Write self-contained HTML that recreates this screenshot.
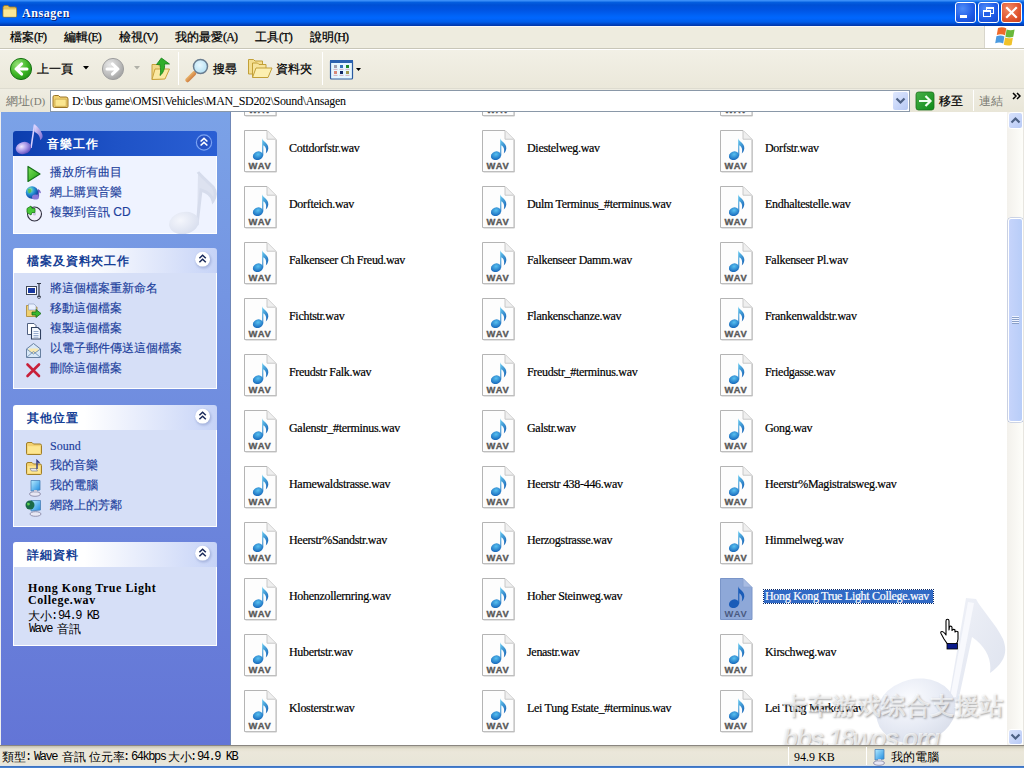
<!DOCTYPE html>
<html><head><meta charset="utf-8">
<style>
*{margin:0;padding:0;box-sizing:border-box}
html,body{width:1024px;height:768px;overflow:hidden;background:#fff;font-family:"Liberation Sans",sans-serif;font-size:12px;color:#000}
.a,.fn,.wi,.mi,.panel,.it,svg.ic{position:absolute;white-space:nowrap}
#title{left:0;top:0;width:1024px;height:26px;background:linear-gradient(#3a8ef8 0,#3a8ef8 1px,#0560e0 2px,#0050d5 5px,#0054e3 10px,#0064f8 16px,#0066fe 18px,#005de9 22px,#0047c8 24px,#0035a5 26px)}
#ttext{left:22px;top:6px;font-family:"Liberation Serif",serif;font-weight:bold;font-size:12px;line-height:14px;color:#fff;letter-spacing:0.55px;text-shadow:1px 1px 0 #0a1e70}
.tbtn{position:absolute;top:2px;width:21px;height:21px;border:1px solid #fff;border-radius:3px;background:radial-gradient(circle at 35% 30%,#4f8cf8,#1e5ae6 60%,#1848c8)}
.tbtn.x{background:radial-gradient(circle at 35% 30%,#f08a68,#e0542e 60%,#c8401e)}
#menu{left:0;top:26px;width:1024px;height:23px;background:#eeecdf;border-top:1px solid #f8f8f8;border-bottom:1px solid #c8c6b8}
#logo{left:984px;top:26px;width:40px;height:22px;background:#fff;border-left:1px solid #d8d6cc}
.mi{top:31px;font-size:12px;line-height:13px;-webkit-text-stroke:0.25px #000}
.mi i{font-style:normal;font-family:"Liberation Serif",serif;font-size:12px;letter-spacing:-0.8px}
#tb{left:0;top:49px;width:1024px;height:39px;background:linear-gradient(#f2f0e6,#ebe8da);border-top:1px solid #fff}
.sep{position:absolute;width:1px;background:#c8c6b8;border-right:1px solid #fff}
#addr{left:0;top:88px;width:1024px;height:24px;background:linear-gradient(#efede2,#e9e6d8);border-top:1px solid #dedcd0}
#abox{left:50px;top:90px;width:860px;height:22px;background:#fff;border:1px solid #8a98a8}
#pane{left:0;top:112px;width:231px;height:633px;background:linear-gradient(#7ba2e7,#6375d6);border-left:1px solid #eeeeee}
#list{left:231px;top:112px;width:777px;height:633px;background:#fff}
#sb{left:1007px;top:112px;width:17px;height:633px;background:linear-gradient(90deg,#f3f1ec,#fefefa)}
#status{left:0;top:745px;width:1024px;height:23px;background:linear-gradient(#c4c0b0 0,#e6e2d2 3px,#ebe7da 6px,#e8e6d8 18px,#dde3ea 20px);border-top:1px solid #8a8680}
#sbot{left:0;top:766px;width:1024px;height:2px;background:linear-gradient(#3a6cb8,#4a88d8)}
.panel{left:13px;width:204px}
.ph{position:relative;height:25px;border-radius:3px 3px 0 0;background:linear-gradient(90deg,#fff 0,#fff 35%,#c6d3f7 100%);color:#163f96;font-weight:bold;font-size:12px;line-height:26px;padding-left:14px;letter-spacing:0.9px}
.ph.sp{background:linear-gradient(90deg,#0c3dae 0,#1e52c6 50%,#2a5fd4 100%);color:#fff;padding-left:34px;font-size:12px;line-height:26px;letter-spacing:0.9px}
.pb{position:relative;background:#d6dff7;border:1px solid #fff;border-top:0}
.pb.sp{background:#eff3ff}
.cbtn{position:absolute;right:5px;top:4px;width:18px;height:18px;border-radius:50%;background:#fff;box-shadow:1px 1px 2px rgba(60,80,140,.45);border:1px solid #d8dde8}
.ph.sp .cbtn{background:transparent;border:1px solid #7ea0e8;box-shadow:none}
.it{left:37px;color:#1c409c;font-size:12px;line-height:14px;-webkit-text-stroke:0.15px #1c409c}
.fn{font-family:"Liberation Serif",serif;font-size:12px;line-height:14px;color:#000;padding:0 1px;letter-spacing:-0.3px;-webkit-text-stroke:0.2px #000}
.fn.sel{padding:0 4px 0 1px;background:#316ac5;color:#fff;outline:1px dotted #0a2a6a;-webkit-text-stroke:0.2px #fff;line-height:13px;margin-top:1px}
.wi{width:33px;height:43px}
.lm{font-family:"Liberation Mono",monospace;font-size:12px;line-height:13px;letter-spacing:-1.45px}
.st{top:751px;font-size:12px;line-height:13px}
.mono{font-family:"Liberation Mono",monospace;font-size:10px}
</style></head><body>
<svg width="0" height="0" style="position:absolute">
<defs>
<linearGradient id="noteg" x1="0" y1="0" x2="1" y2="1"><stop offset="0" stop-color="#5fc6f2"/><stop offset="1" stop-color="#0f68c0"/></linearGradient>
<linearGradient id="notes" x1="0" y1="0" x2="0.6" y2="1"><stop offset="0" stop-color="#6cd0f4"/><stop offset="1" stop-color="#1a66b8"/></linearGradient>
<radialGradient id="noteh" cx="0.55" cy="0.35" r="0.7"><stop offset="0" stop-color="#58c0f0"/><stop offset="1" stop-color="#1262b8"/></radialGradient>
<symbol id="wav" viewBox="0 0 33 43">
<path d="M0.5 0.5H23L32 9.5V41.5H0.5Z" fill="#fdfdfd" stroke="#b4b4b4"/>
<path d="M1.5 42H32.5V10" fill="none" stroke="#c8c8c8"/>
<path d="M23 0.8V9.2H31.5" fill="#efefef" stroke="#c8c8c8"/>
<path d="M18.2 8.2C18.6 11.5 24.8 12.8 24.3 18.5C24.1 20.8 23 22.4 21.8 23.6C22.4 20.5 22.6 17 19.3 15.2V25.5H18.2Z" fill="url(#notes)"/>
<ellipse cx="14" cy="25.7" rx="5.2" ry="4.2" transform="rotate(-20 14 25.7)" fill="url(#noteh)"/>
<text x="16.1" y="38.6" text-anchor="middle" font-family="Liberation Sans" font-weight="bold" font-size="9.4" fill="#585858" stroke="#585858" stroke-width="0.35" letter-spacing="0.9">WAV</text>
</symbol>
<symbol id="wavsel" viewBox="0 0 33 43">
<path d="M0.5 0.5H23L32 9.5V41.5H0.5Z" fill="#8ea8d8" stroke="#7a95c8"/>
<path d="M23 0.8V9.2H31.5" fill="#a8bce2" stroke="#8aa2d0"/>
<path d="M18.2 8.2C18.6 11.5 24.8 12.8 24.3 18.5C24.1 20.8 23 22.4 21.8 23.6C22.4 20.5 22.6 17 19.3 15.2V25.5H18.2Z" fill="#1a5cb8"/>
<ellipse cx="14" cy="25.7" rx="5.2" ry="4.2" transform="rotate(-20 14 25.7)" fill="#1a5cb8"/>
<text x="16.1" y="38.6" text-anchor="middle" font-family="Liberation Sans" font-weight="bold" font-size="9.4" fill="#4a5a80" letter-spacing="0.9">WAV</text>
</symbol>
</defs>
</svg>
<div id="title" class="a"></div>
<div id="ttext" class="a">Ansagen</div>
<div class="tbtn" style="left:955px"></div>
<div class="tbtn" style="left:978px"></div>
<div class="tbtn x" style="left:1001px"></div>

<svg class="ic" style="left:2px;top:4px" width="16" height="14" viewBox="0 0 16 14">
<path d="M1 3.5Q1 1.5 3 1.5H6L7.5 3H13Q14.5 3 14.5 4.5V12Q14.5 13 13.5 13H2Q1 13 1 12Z" fill="#e6c25a" stroke="#a07820" stroke-width="0.8"/>
<path d="M1.5 5.5H14.2V12.2Q14.2 12.8 13.5 12.8H2Q1.5 12.8 1.5 12.2Z" fill="#fde898"/>
</svg>
<div class="a" style="left:960px;top:15px;width:7px;height:3px;background:#fff"></div>
<div class="a" style="left:986px;top:7px;width:8px;height:7px;border:1px solid #fff;border-top-width:2px"></div>
<div class="a" style="left:983px;top:10px;width:8px;height:7px;border:1px solid #fff;border-top-width:2px;background:#2560e8"></div>
<svg class="ic" style="left:1001px;top:2px" width="21" height="21" viewBox="0 0 21 21"><path d="M6 6L15 15M15 6L6 15" stroke="#fff" stroke-width="2.2" stroke-linecap="square"/></svg>
<div id="menu" class="a"></div>
<div id="logo" class="a"></div>
<svg class="ic" style="left:994px;top:26px" width="22" height="21" viewBox="0 0 22 21">
<path d="M4 2Q8 0.5 12.3 2.2L11 9.2Q7 7.6 2.8 9Z" fill="#ef6a2a"/>
<path d="M12.6 3.6Q16.5 5 20.6 3.6L19.3 10.8Q15.4 12.2 11.4 10.8Z" fill="#6ab83a"/>
<path d="M2.4 10.2Q6.5 8.8 10.4 10.4L9.2 17.4Q5.4 15.8 1.2 17.2Z" fill="#4a9ae0"/>
<path d="M11 11.6Q14.8 13 18.9 11.8L17.6 19Q13.8 20.3 9.8 18.8Z" fill="#f0c22a"/>
</svg>

<div class="mi" style="left:10px">檔案<i>(F)</i></div>
<div class="mi" style="left:64px">編輯<i>(E)</i></div>
<div class="mi" style="left:119px">檢視<i>(V)</i></div>
<div class="mi" style="left:175px">我的最愛<i>(A)</i></div>
<div class="mi" style="left:255px">工具<i>(T)</i></div>
<div class="mi" style="left:310px">說明<i>(H)</i></div>
<div id="tb" class="a"></div>
<div class="sep" style="left:178px;top:52px;height:33px"></div>
<div class="sep" style="left:322px;top:52px;height:33px"></div>
<div class="a" style="left:37px;top:62px;font-size:12px;line-height:14px;-webkit-text-stroke:0.25px #000">上一頁</div>
<div class="a" style="left:213px;top:62px;font-size:12px;line-height:14px;-webkit-text-stroke:0.25px #000">搜尋</div>
<div class="a" style="left:276px;top:62px;font-size:12px;line-height:14px;-webkit-text-stroke:0.25px #000">資料夾</div>

<svg class="ic" style="left:9px;top:57px" width="24" height="24" viewBox="0 0 24 24">
<defs><radialGradient id="gbk" cx="0.35" cy="0.3" r="0.8"><stop offset="0" stop-color="#9ae27a"/><stop offset="0.6" stop-color="#3cb524"/><stop offset="1" stop-color="#1d8a14"/></radialGradient></defs>
<circle cx="12" cy="12" r="10.6" fill="url(#gbk)" stroke="#1b7318" stroke-width="1"/>
<path d="M12.6 6.8L7 12L12.6 17.2M7.2 12H18" fill="none" stroke="#fff" stroke-width="3" stroke-linecap="round" stroke-linejoin="round"/>
</svg>
<svg class="ic" style="left:83px;top:66px" width="6" height="4"><path d="M0 0H6L3 3.5Z" fill="#000"/></svg>
<svg class="ic" style="left:101px;top:57px" width="24" height="24" viewBox="0 0 24 24">
<defs><radialGradient id="ggr" cx="0.35" cy="0.3" r="0.8"><stop offset="0" stop-color="#e8e8e8"/><stop offset="0.6" stop-color="#bdbdbd"/><stop offset="1" stop-color="#9a9a9a"/></radialGradient></defs>
<circle cx="12" cy="12" r="10.6" fill="url(#ggr)" stroke="#a0a0a0" stroke-width="1"/>
<path d="M11.4 6.8L17 12L11.4 17.2M16.8 12H6" fill="none" stroke="#fff" stroke-width="3" stroke-linecap="round" stroke-linejoin="round"/>
</svg>
<svg class="ic" style="left:134px;top:66px" width="6" height="4"><path d="M0 0H6L3 3.5Z" fill="#b0b0a8"/></svg>
<svg class="ic" style="left:150px;top:56px" width="22" height="26" viewBox="0 0 22 26">
<path d="M2 8.5H8L9.5 10H14V22.5L2 23.5Z" fill="#f2d98a" stroke="#c9a23c" stroke-width="1"/>
<path d="M2 23.5L5 13H19.5L15 23Z" fill="#fbe9a4" stroke="#c9a23c" stroke-width="1"/>
<path d="M11.4 2L6.5 8.5H10C10.5 12 11 16 10 19.5C13.5 17 15 12 14.5 8H19.5Z" fill="#2fae2a" stroke="#15821a" stroke-width="0.8"/>
</svg>
<svg class="ic" style="left:183px;top:56px" width="28" height="28" viewBox="0 0 28 28">
<defs><radialGradient id="gls" cx="0.45" cy="0.4" r="0.6"><stop offset="0" stop-color="#e8f8ff"/><stop offset="1" stop-color="#b4e0f4"/></radialGradient>
<linearGradient id="ghd" x1="0" y1="0" x2="1" y2="1"><stop offset="0" stop-color="#f8d080"/><stop offset="1" stop-color="#c0602a"/></linearGradient></defs>
<path d="M4.5 24L11 17.5" stroke="url(#ghd)" stroke-width="4.5" stroke-linecap="round"/>
<circle cx="17.5" cy="10.5" r="7" fill="url(#gls)" stroke="#6a7d90" stroke-width="1.5"/>
</svg>
<svg class="ic" style="left:247px;top:58px" width="26" height="22" viewBox="0 0 26 22">
<path d="M1.5 1.5H6.5L8 3H15.5V16H1.5Z" fill="#f4de90" stroke="#c2a038" stroke-width="1"/>
<path d="M5.5 5H10.5L12 6.5H19V19H5.5Z" fill="#f7e49c" stroke="#c2a038" stroke-width="1"/>
<path d="M5.5 19.5L9 10H25L21 19.5Z" fill="#fcefb0" stroke="#c2a038" stroke-width="1"/>
</svg>
<svg class="ic" style="left:329px;top:59px" width="36" height="22" viewBox="0 0 36 22">
<rect x="1.5" y="1.5" width="22" height="18.5" rx="1" fill="#e6f6ff" stroke="#2a5aa0" stroke-width="1.2"/>
<rect x="1" y="1" width="23" height="3" fill="#2a62b0"/>
<rect x="5" y="6" width="3" height="3" fill="#a0a0b0"/><rect x="11" y="6" width="3" height="3" fill="#3070b8"/><rect x="17" y="6" width="3" height="3" fill="#208828"/>
<rect x="5" y="12" width="3" height="3" fill="#d88878"/><rect x="11" y="12" width="3" height="3" fill="#102868"/><rect x="17" y="12" width="3" height="3" fill="#a09850"/>
<path d="M4.5 10.4H8.5M10.5 10.4H14.5M16.5 10.4H20.5M4.5 16.4H8.5M10.5 16.4H14.5M16.5 16.4H20.5" stroke="#c8a0b0" stroke-width="0.8"/>
<path d="M27 9H32L29.5 12Z" fill="#000"/>
</svg>
<div id="addr" class="a"></div>
<div class="a" style="left:6px;top:95px;color:#7a7a72;font-size:12px;line-height:13px">網址<i style="font-style:normal;font-family:'Liberation Serif';font-size:11px">(D)</i></div>
<div id="abox" class="a"></div>
<svg class="ic" style="left:52px;top:94px" width="18" height="15" viewBox="0 0 18 15">
<path d="M1 3Q1 1.5 2.5 1.5H6.5L8 3H14Q16 3 16 5V12.5Q16 13.5 15 13.5H2.5Q1 13.5 1 12Z" fill="#f0d070" stroke="#9a7428" stroke-width="1"/>
<path d="M3 5.2H14.2V12.3H3Z" fill="#fbe690" stroke="#c09a40" stroke-width="0.6"/>
</svg>
<div class="a" style="left:893px;top:92px;width:15px;height:18px;border-radius:2px;background:linear-gradient(135deg,#dfe8fe,#b6c8f4)"></div>
<svg class="ic" style="left:895px;top:97px" width="11" height="8" viewBox="0 0 11 8"><path d="M1.5 1.5L5.5 5.5L9.5 1.5" fill="none" stroke="#4d6185" stroke-width="2.2"/></svg>
<svg class="ic" style="left:915px;top:91px" width="20" height="20" viewBox="0 0 20 20">
<defs><linearGradient id="ggo" x1="0" y1="0" x2="1" y2="1"><stop offset="0" stop-color="#48b048"/><stop offset="1" stop-color="#0c8a18"/></linearGradient></defs>
<rect x="1" y="1" width="18" height="18" rx="2.5" fill="url(#ggo)" stroke="#1c6e1c" stroke-width="0.8"/>
<path d="M4 10H15M10.5 5L15.5 10L10.5 15" fill="none" stroke="#f0fff0" stroke-width="2.2"/>
</svg>
<svg class="ic" style="left:1012px;top:92px" width="9" height="8" viewBox="0 0 9 8"><path d="M1 1L4 4L1 7M5 1L8 4L5 7" fill="none" stroke="#000" stroke-width="1.5"/></svg>

<div class="a" style="left:72px;top:95px;font-family:'Liberation Serif',serif;font-size:12px;line-height:13px;letter-spacing:-0.3px">D:\bus game\OMSI\Vehicles\MAN_SD202\Sound\Ansagen</div>
<div class="a" style="left:939px;top:95px;font-size:12px;line-height:13px;-webkit-text-stroke:0.25px #000">移至</div>
<div class="sep" style="left:973px;top:90px;height:21px"></div>
<div class="a" style="left:979px;top:95px;font-size:12px;line-height:13px;color:#7a7a72">連結</div>
<div id="pane" class="a"></div>
<div id="list" class="a"></div><div class="a" style="left:230px;top:112px;width:1px;height:633px;background:#7088b8"></div>
<div id="sb" class="a"></div>
<div class="a" style="left:1008px;top:112px;width:15px;height:17px;border:1px solid #fff;border-radius:3px;background:linear-gradient(135deg,#d8e2fc,#b8caf6)"></div>
<svg class="ic" style="left:1010px;top:116px" width="11" height="8" viewBox="0 0 11 8"><path d="M1.5 6.5L5.5 2.5L9.5 6.5" fill="none" stroke="#4d6185" stroke-width="2.2"/></svg>
<div class="a" style="left:1008px;top:218px;width:15px;height:204px;border:1px solid #fff;border-radius:3px;background:linear-gradient(90deg,#c6d4fb,#b8cdf8);box-shadow:0 0 0 0.5px #9fb0d8"></div>
<div class="a" style="left:1012px;top:316px;width:7px;height:8px;background:repeating-linear-gradient(#eef3ff 0,#eef3ff 1px,#8aa0c8 1px,#8aa0c8 2px)"></div>
<div class="a" style="left:1008px;top:729px;width:15px;height:16px;border:1px solid #fff;border-radius:3px;background:linear-gradient(135deg,#d8e2fc,#b8caf6)"></div>
<svg class="ic" style="left:1010px;top:733px" width="11" height="8" viewBox="0 0 11 8"><path d="M1.5 1.5L5.5 5.5L9.5 1.5" fill="none" stroke="#4d6185" stroke-width="2.2"/></svg>
<div class="a" style="left:1023px;top:112px;width:1px;height:633px;background:#e8e6e0"></div>

<div class="a" style="left:231px;top:112px;width:777px;height:633px;overflow:hidden"><svg class="wi" style="left:13px;top:-38px" width="33" height="43"><use href="#wav"/></svg>
<svg class="wi" style="left:251px;top:-38px" width="33" height="43"><use href="#wav"/></svg>
<svg class="wi" style="left:489px;top:-38px" width="33" height="43"><use href="#wav"/></svg>
<svg class="wi" style="left:13px;top:18px" width="33" height="43"><use href="#wav"/></svg>
<div class="fn" style="left:57px;top:29px">Cottdorfstr.wav</div>
<svg class="wi" style="left:251px;top:18px" width="33" height="43"><use href="#wav"/></svg>
<div class="fn" style="left:295px;top:29px">Diestelweg.wav</div>
<svg class="wi" style="left:489px;top:18px" width="33" height="43"><use href="#wav"/></svg>
<div class="fn" style="left:533px;top:29px">Dorfstr.wav</div>
<svg class="wi" style="left:13px;top:74px" width="33" height="43"><use href="#wav"/></svg>
<div class="fn" style="left:57px;top:85px">Dorfteich.wav</div>
<svg class="wi" style="left:251px;top:74px" width="33" height="43"><use href="#wav"/></svg>
<div class="fn" style="left:295px;top:85px">Dulm Terminus_#terminus.wav</div>
<svg class="wi" style="left:489px;top:74px" width="33" height="43"><use href="#wav"/></svg>
<div class="fn" style="left:533px;top:85px">Endhaltestelle.wav</div>
<svg class="wi" style="left:13px;top:130px" width="33" height="43"><use href="#wav"/></svg>
<div class="fn" style="left:57px;top:141px">Falkenseer Ch Freud.wav</div>
<svg class="wi" style="left:251px;top:130px" width="33" height="43"><use href="#wav"/></svg>
<div class="fn" style="left:295px;top:141px">Falkenseer Damm.wav</div>
<svg class="wi" style="left:489px;top:130px" width="33" height="43"><use href="#wav"/></svg>
<div class="fn" style="left:533px;top:141px">Falkenseer Pl.wav</div>
<svg class="wi" style="left:13px;top:186px" width="33" height="43"><use href="#wav"/></svg>
<div class="fn" style="left:57px;top:197px">Fichtstr.wav</div>
<svg class="wi" style="left:251px;top:186px" width="33" height="43"><use href="#wav"/></svg>
<div class="fn" style="left:295px;top:197px">Flankenschanze.wav</div>
<svg class="wi" style="left:489px;top:186px" width="33" height="43"><use href="#wav"/></svg>
<div class="fn" style="left:533px;top:197px">Frankenwaldstr.wav</div>
<svg class="wi" style="left:13px;top:242px" width="33" height="43"><use href="#wav"/></svg>
<div class="fn" style="left:57px;top:253px">Freudstr Falk.wav</div>
<svg class="wi" style="left:251px;top:242px" width="33" height="43"><use href="#wav"/></svg>
<div class="fn" style="left:295px;top:253px">Freudstr_#terminus.wav</div>
<svg class="wi" style="left:489px;top:242px" width="33" height="43"><use href="#wav"/></svg>
<div class="fn" style="left:533px;top:253px">Friedgasse.wav</div>
<svg class="wi" style="left:13px;top:298px" width="33" height="43"><use href="#wav"/></svg>
<div class="fn" style="left:57px;top:309px">Galenstr_#terminus.wav</div>
<svg class="wi" style="left:251px;top:298px" width="33" height="43"><use href="#wav"/></svg>
<div class="fn" style="left:295px;top:309px">Galstr.wav</div>
<svg class="wi" style="left:489px;top:298px" width="33" height="43"><use href="#wav"/></svg>
<div class="fn" style="left:533px;top:309px">Gong.wav</div>
<svg class="wi" style="left:13px;top:354px" width="33" height="43"><use href="#wav"/></svg>
<div class="fn" style="left:57px;top:365px">Hamewaldstrasse.wav</div>
<svg class="wi" style="left:251px;top:354px" width="33" height="43"><use href="#wav"/></svg>
<div class="fn" style="left:295px;top:365px">Heerstr 438-446.wav</div>
<svg class="wi" style="left:489px;top:354px" width="33" height="43"><use href="#wav"/></svg>
<div class="fn" style="left:533px;top:365px">Heerstr%Magistratsweg.wav</div>
<svg class="wi" style="left:13px;top:410px" width="33" height="43"><use href="#wav"/></svg>
<div class="fn" style="left:57px;top:421px">Heerstr%Sandstr.wav</div>
<svg class="wi" style="left:251px;top:410px" width="33" height="43"><use href="#wav"/></svg>
<div class="fn" style="left:295px;top:421px">Herzogstrasse.wav</div>
<svg class="wi" style="left:489px;top:410px" width="33" height="43"><use href="#wav"/></svg>
<div class="fn" style="left:533px;top:421px">Himmelweg.wav</div>
<svg class="wi" style="left:13px;top:466px" width="33" height="43"><use href="#wav"/></svg>
<div class="fn" style="left:57px;top:477px">Hohenzollernring.wav</div>
<svg class="wi" style="left:251px;top:466px" width="33" height="43"><use href="#wav"/></svg>
<div class="fn" style="left:295px;top:477px">Hoher Steinweg.wav</div>
<svg class="wi" style="left:489px;top:466px" width="33" height="43"><use href="#wavsel"/></svg>
<div class="fn sel" style="left:533px;top:477px">Hong Kong True Light College.wav</div>
<svg class="wi" style="left:13px;top:522px" width="33" height="43"><use href="#wav"/></svg>
<div class="fn" style="left:57px;top:533px">Hubertstr.wav</div>
<svg class="wi" style="left:251px;top:522px" width="33" height="43"><use href="#wav"/></svg>
<div class="fn" style="left:295px;top:533px">Jenastr.wav</div>
<svg class="wi" style="left:489px;top:522px" width="33" height="43"><use href="#wav"/></svg>
<div class="fn" style="left:533px;top:533px">Kirschweg.wav</div>
<svg class="wi" style="left:13px;top:578px" width="33" height="43"><use href="#wav"/></svg>
<div class="fn" style="left:57px;top:589px">Klosterstr.wav</div>
<svg class="wi" style="left:251px;top:578px" width="33" height="43"><use href="#wav"/></svg>
<div class="fn" style="left:295px;top:589px">Lei Tung Estate_#terminus.wav</div>
<svg class="wi" style="left:489px;top:578px" width="33" height="43"><use href="#wav"/></svg>
<div class="fn" style="left:533px;top:589px">Lei Tung Market.wav</div></div>
<!-- left pane panels -->
<div class="panel" style="top:131px">
 <div class="ph sp">音樂工作</div>
 <div class="pb sp" style="height:78px"></div>
</div>
<div class="it" style="top:165px;left:50px">播放所有曲目</div>
<div class="it" style="top:185px;left:50px">網上購買音樂</div>
<div class="it" style="top:205px;left:50px">複製到音訊 CD</div>

<div class="panel" style="top:248px">
 <div class="ph">檔案及資料夾工作</div>
 <div class="pb" style="height:116px"></div>
</div>
<div class="it" style="top:281px;left:50px">將這個檔案重新命名</div>
<div class="it" style="top:301px;left:50px">移動這個檔案</div>
<div class="it" style="top:321px;left:50px">複製這個檔案</div>
<div class="it" style="top:341px;left:50px">以電子郵件傳送這個檔案</div>
<div class="it" style="top:361px;left:50px">刪除這個檔案</div>

<div class="panel" style="top:405px">
 <div class="ph">其他位置</div>
 <div class="pb" style="height:97px"></div>
</div>
<div class="it" style="top:439px;left:50px;font-family:'Liberation Serif',serif">Sound</div>
<div class="it" style="top:458px;left:50px">我的音樂</div>
<div class="it" style="top:478px;left:50px">我的電腦</div>
<div class="it" style="top:498px;left:50px">網路上的芳鄰</div>

<div class="panel" style="top:542px">
 <div class="ph">詳細資料</div>
 <div class="pb" style="height:79px"></div>
</div>
<div class="a" style="left:28px;top:582px;font-family:'Liberation Serif',serif;font-weight:bold;font-size:12px;line-height:12px;letter-spacing:0.55px">Hong Kong True Light<br>College.wav</div>
<div class="a" style="left:28px;top:610px;font-size:12px;line-height:13px">大小</div>
<div class="a lm" style="left:51px;top:610px">:</div>
<div class="a lm" style="left:58px;top:610px">94.9 KB</div>
<div class="a lm" style="left:29px;top:623px">Wave</div>
<div class="a" style="left:57px;top:623px;font-size:12px;line-height:13px">音訊</div>


<div class="a" style="left:231px;top:112px;width:776px;height:633px;overflow:hidden;pointer-events:none">
<svg class="ic" style="left:640px;top:480px" width="140" height="160" viewBox="640 480 140 160">
<defs><radialGradient id="wbn" cx="0.45" cy="0.3" r="0.75"><stop offset="0" stop-color="#fbfcff"/><stop offset="0.6" stop-color="#e6eaf4"/><stop offset="1" stop-color="#d8dde9"/></radialGradient>
<linearGradient id="wbf" x1="0" y1="0" x2="1" y2="1"><stop offset="0" stop-color="#f0f2f8"/><stop offset="1" stop-color="#dde2ee"/></linearGradient></defs>
<path d="M735 486L745 487C750 497 765 512 772 527C777 540 774 550 759 561C761 547 755 535 741 525L727 590L717 592Z" fill="url(#wbf)"/>
<path d="M737 490L743 491L725 585L719 586Z" fill="#f8f9fd"/>
<ellipse cx="685" cy="599" rx="40" ry="32" transform="rotate(-14 685 599)" fill="url(#wbn)"/>
</svg>
</div>
<svg class="ic" style="left:939px;top:618px" width="22" height="32" viewBox="0 0 22 32">
<path d="M7 3Q7 1.2 8.5 1.2Q10 1.2 10 3V12L10.5 8.5Q12.5 7.5 13 9.5V12.5Q14.5 10.5 16 12V14Q17.5 12.5 19 14V21Q19 24 17 26H8.5Q7 24 5 21L2 15.5Q1.2 13.5 3 13.5Q4.5 13.5 7 17Z" fill="#fff" stroke="#000" stroke-width="1.1" stroke-linejoin="round"/>
<rect x="8" y="25.5" width="10.5" height="5.5" fill="#0a1a8a" stroke="#000" stroke-width="0.8"/>
</svg>
<div class="a" style="left:783px;top:691px;font-size:24px;line-height:30px;font-weight:bold;color:rgba(255,255,255,0.68);text-shadow:1px 1px 2px rgba(40,40,40,0.4);letter-spacing:0.5px">卡车游戏综合支援站</div>
<div class="a" style="left:782px;top:724px;font-size:26px;line-height:28px;font-weight:bold;font-style:italic;letter-spacing:-2px;color:rgba(255,255,255,0.68);text-shadow:1px 1px 2px rgba(40,40,40,0.4)">bbs.18wos.org</div>
<div id="status" class="a"></div>
<div class="a st" style="left:2px">類型</div>
<div class="a lm" style="left:25px;top:751px">:</div>
<div class="a lm" style="left:34px;top:751px">Wave</div>
<div class="a st" style="left:62px">音訊</div>
<div class="a st" style="left:89px">位元率</div>
<div class="a lm" style="left:123px;top:751px">:</div>
<div class="a lm" style="left:131px;top:751px">64kbps</div>
<div class="a st" style="left:168px">大小</div>
<div class="a lm" style="left:190px;top:751px">:</div>
<div class="a lm" style="left:197px;top:751px">94.9 KB</div>
<div class="sep" style="left:788px;top:747px;height:18px"></div>
<div class="sep" style="left:866px;top:747px;height:18px"></div>
<div class="a" style="left:794px;top:751px;line-height:13px;font-size:12px;font-family:'Liberation Serif',serif">94.9 KB</div>
<div class="a" style="left:891px;top:751px;font-size:12px;line-height:13px">我的電腦</div>

<svg class="ic" style="left:150px;top:170px" width="67" height="64" viewBox="0 0 67 64">
<defs><radialGradient id="wmn" cx="0.4" cy="0.35" r="0.7"><stop offset="0" stop-color="#f4f6fc"/><stop offset="1" stop-color="#d8deee"/></radialGradient></defs>
<path d="M48 2C50 5 57 11 63 17C66 21 66 27 63 31C62 26 58 22 51 20L47 55" fill="#dde2f0" stroke="#d6dcec" stroke-width="3"/>
<ellipse cx="34" cy="53" rx="15" ry="11" transform="rotate(-12 34 53)" fill="url(#wmn)"/>
</svg>
<svg class="ic" style="left:13px;top:120px" width="34" height="38" viewBox="0 0 34 38">
<defs><radialGradient id="pn" cx="0.4" cy="0.35" r="0.7"><stop offset="0" stop-color="#f0e8ff"/><stop offset="0.5" stop-color="#a898e8"/><stop offset="1" stop-color="#5a48b8"/></radialGradient>
<linearGradient id="pf" x1="0" y1="0" x2="1" y2="1"><stop offset="0" stop-color="#e8e0ff"/><stop offset="1" stop-color="#7868d0"/></linearGradient></defs>
<path d="M21.5 4.5C24 6 28 10 29.5 15C30 17.5 29 19 27 20C27.5 16.5 24.5 13 21.5 12Z" fill="url(#pf)"/>
<path d="M21.5 4.5L18 28" stroke="#d8d0ff" stroke-width="1.6"/>
<ellipse cx="10.5" cy="28" rx="7.8" ry="6" transform="rotate(-15 10.5 28)" fill="url(#pn)"/>
</svg>
<svg class="ic" style="left:195px;top:134px" width="18" height="18" viewBox="0 0 18 18">
<circle cx="9" cy="8.5" r="7.6" fill="#2652c4" stroke="#7aa2f2" stroke-width="1.2"/>
<path d="M5.6 7.5L9 4.3L12.4 7.5M5.6 11.5L9 8.3L12.4 11.5" fill="none" stroke="#fff" stroke-width="1.6"/>
</svg>
<svg class="ic" style="left:26px;top:165px" width="16" height="18" viewBox="0 0 16 18">
<defs><linearGradient id="gpl" x1="0" y1="0" x2="1" y2="1"><stop offset="0" stop-color="#7ee05a"/><stop offset="1" stop-color="#18a010"/></linearGradient></defs>
<path d="M2 1.5V16.5L14 9Z" fill="url(#gpl)" stroke="#157018" stroke-width="1.2" stroke-linejoin="round"/>
</svg>
<svg class="ic" style="left:25px;top:185px" width="16" height="16" viewBox="0 0 16 16">
<defs><radialGradient id="ggl" cx="0.35" cy="0.3" r="0.7"><stop offset="0" stop-color="#9ff0a0"/><stop offset="0.45" stop-color="#2a9ad8"/><stop offset="1" stop-color="#0a3aa0"/></radialGradient></defs>
<circle cx="7" cy="7.5" r="6.2" fill="url(#ggl)"/>
<path d="M3 4Q6 3 6.5 6Q5 9 3.5 8Z" fill="#50c040" opacity="0.8"/>
<ellipse cx="10.5" cy="12" rx="3.5" ry="2.6" fill="#8a78d8"/>
<path d="M13.5 11.5V5Q15.5 6 15 8" fill="none" stroke="#6a58c0" stroke-width="1.2"/>
</svg>
<svg class="ic" style="left:26px;top:205px" width="17" height="17" viewBox="0 0 17 17">
<circle cx="8.5" cy="9" r="7" fill="#f0eefa" stroke="#303040" stroke-width="1.1"/>
<circle cx="8.5" cy="9" r="1.6" fill="#c8c0e0"/>
<path d="M1 3.5L5 1L6 3.5H9V7.5H6L5 10L1 7.5Z" fill="#48c838" stroke="#1c7a18" stroke-width="0.8"/>
</svg>

<svg class="ic" style="left:190px;top:251px" width="24" height="24" viewBox="0 0 24 24">
<defs><filter id="shd" x="-30%" y="-30%" width="160%" height="160%"><feGaussianBlur stdDeviation="0.9"/></filter></defs>
<circle cx="13.5" cy="9.5" r="8" fill="#8898c8" opacity="0.55" filter="url(#shd)"/>
<circle cx="12.6" cy="8.2" r="7.4" fill="#fff"/>
<path d="M9.4 7.3L12.6 4.2L15.8 7.3M9.4 11.3L12.6 8.2L15.8 11.3" fill="none" stroke="#1a2a5a" stroke-width="1.5"/>
</svg>
<svg class="ic" style="left:190px;top:408px" width="24" height="24" viewBox="0 0 24 24">
<circle cx="13.5" cy="9.5" r="8" fill="#8898c8" opacity="0.55" filter="url(#shd)"/>
<circle cx="12.6" cy="8.2" r="7.4" fill="#fff"/>
<path d="M9.4 7.3L12.6 4.2L15.8 7.3M9.4 11.3L12.6 8.2L15.8 11.3" fill="none" stroke="#1a2a5a" stroke-width="1.5"/>
</svg>
<svg class="ic" style="left:190px;top:545px" width="24" height="24" viewBox="0 0 24 24">
<circle cx="13.5" cy="9.5" r="8" fill="#8898c8" opacity="0.55" filter="url(#shd)"/>
<circle cx="12.6" cy="8.2" r="7.4" fill="#fff"/>
<path d="M9.4 7.3L12.6 4.2L15.8 7.3M9.4 11.3L12.6 8.2L15.8 11.3" fill="none" stroke="#1a2a5a" stroke-width="1.5"/>
</svg>

<svg class="ic" style="left:25px;top:282px" width="18" height="17" viewBox="0 0 18 17">
<rect x="1.5" y="4.5" width="10" height="8" fill="#fff" stroke="#404858" stroke-width="1"/>
<rect x="3" y="6" width="7" height="5" fill="#1838a0"/>
<path d="M14 1.5V14.5M12 1.5H16M12 14.5H16" stroke="#303848" stroke-width="1.2"/>
<circle cx="14" cy="15" r="1.5" fill="none" stroke="#606878"/>
</svg>
<svg class="ic" style="left:25px;top:302px" width="18" height="17" viewBox="0 0 18 17">
<path d="M1.5 3.5H6L7.5 5H12V14.5H1.5Z" fill="#f0d070" stroke="#a88430" stroke-width="0.8"/>
<path d="M3.5 2H9L11 4V8H3.5Z" fill="#e8f0ff" stroke="#8898b8" stroke-width="0.6"/>
<path d="M7 10H11V7.5L16 11.5L11 15.5V13H7Z" fill="#38b830" stroke="#1a6a18" stroke-width="0.8"/>
</svg>
<svg class="ic" style="left:25px;top:322px" width="18" height="18" viewBox="0 0 18 18">
<path d="M2.5 1.5H9L11 3.5V12.5H2.5Z" fill="#fff" stroke="#506080" stroke-width="1"/>
<path d="M6.5 5.5H13L15.5 8V17H6.5Z" fill="#f4f8ff" stroke="#304060" stroke-width="1.1"/>
<path d="M8.5 9.5H13.5M8.5 11.5H13.5M8.5 13.5H13.5M8.5 15.2H13.5" stroke="#8098c0" stroke-width="0.8"/>
</svg>
<svg class="ic" style="left:25px;top:342px" width="18" height="17" viewBox="0 0 18 17">
<path d="M1.5 7L8.5 1.5L15.5 7V15.5H1.5Z" fill="#d8e8f8" stroke="#6880a0" stroke-width="1"/>
<path d="M3.5 6.5H13.5V9L8.5 12L3.5 9Z" fill="#f8e8b0"/>
<path d="M1.5 15.5L8.5 9.5L15.5 15.5M1.5 7L8.5 12L15.5 7" fill="none" stroke="#7090b8" stroke-width="0.9"/>
</svg>
<svg class="ic" style="left:25px;top:362px" width="17" height="17" viewBox="0 0 17 17">
<path d="M2.5 2.5L14 14M14 2.5L2.5 14" stroke="#c8203a" stroke-width="2.6" stroke-linecap="round"/>
</svg>

<svg class="ic" style="left:25px;top:440px" width="18" height="16" viewBox="0 0 18 16">
<path d="M1.5 4Q1.5 2.5 3 2.5H7L8.5 4H15Q16.5 4 16.5 5.5V13.5Q16.5 14.5 15.5 14.5H2.5Q1.5 14.5 1.5 13.5Z" fill="#f2d070" stroke="#a07e28" stroke-width="1"/>
<path d="M2.6 6.2H15.4V13.4H2.6Z" fill="#fde690"/>
</svg>
<svg class="ic" style="left:25px;top:459px" width="18" height="17" viewBox="0 0 18 17">
<path d="M1.5 5Q1.5 3.5 3 3.5H7L8.5 5H15Q16.5 5 16.5 6.5V14.5Q16.5 15.5 15.5 15.5H2.5Q1.5 15.5 1.5 14.5Z" fill="#f2d070" stroke="#a07e28" stroke-width="1"/>
<path d="M2.6 7.2H15.4V14.4H2.6Z" fill="#fde690"/>
<path d="M5 9.5H11L12.5 12H6.5Z" fill="#e8e8f0" stroke="#707080" stroke-width="0.6"/>
<path d="M12 10V1.5L14.5 4" fill="none" stroke="#303880" stroke-width="1.4"/>
</svg>
<svg class="ic" style="left:27px;top:479px" width="16" height="18" viewBox="0 0 16 18">
<defs><linearGradient id="gsc" x1="0" y1="0" x2="1" y2="1"><stop offset="0" stop-color="#b8ecff"/><stop offset="1" stop-color="#1a8ae0"/></linearGradient></defs>
<path d="M4 1.5H13V11L4 12Z" fill="url(#gsc)" stroke="#4a80b8" stroke-width="0.8"/>
<ellipse cx="8" cy="15" rx="5.5" ry="2.3" fill="#e8e8f4" stroke="#8080a0" stroke-width="0.8"/>
<rect x="7" y="11" width="3" height="3" fill="#c8c8d8"/>
</svg>
<svg class="ic" style="left:25px;top:499px" width="18" height="18" viewBox="0 0 18 18">
<path d="M6 1.5H15.5V11L6 12Z" fill="url(#gsc)" stroke="#4a80b8" stroke-width="0.8"/>
<ellipse cx="10.5" cy="15" rx="5.5" ry="2.3" fill="#e8e8f4" stroke="#8080a0" stroke-width="0.8"/>
<circle cx="5" cy="6" r="4.5" fill="#1a6a48"/>
<path d="M2 4Q4 3 5 5Q4 7 2.5 6.5Z" fill="#5ad050"/>
</svg>

<svg class="ic" style="left:871px;top:748px" width="16" height="18" viewBox="0 0 16 18">
<path d="M4 1.5H13V11L4 12Z" fill="url(#gsc)" stroke="#4a80b8" stroke-width="0.8"/>
<ellipse cx="8" cy="15" rx="5.5" ry="2.3" fill="#e8e8f4" stroke="#8080a0" stroke-width="0.8"/>
<rect x="7" y="11" width="3" height="3" fill="#c8c8d8"/>
</svg>
<div id="sbot" class="a"></div>
</body></html>
